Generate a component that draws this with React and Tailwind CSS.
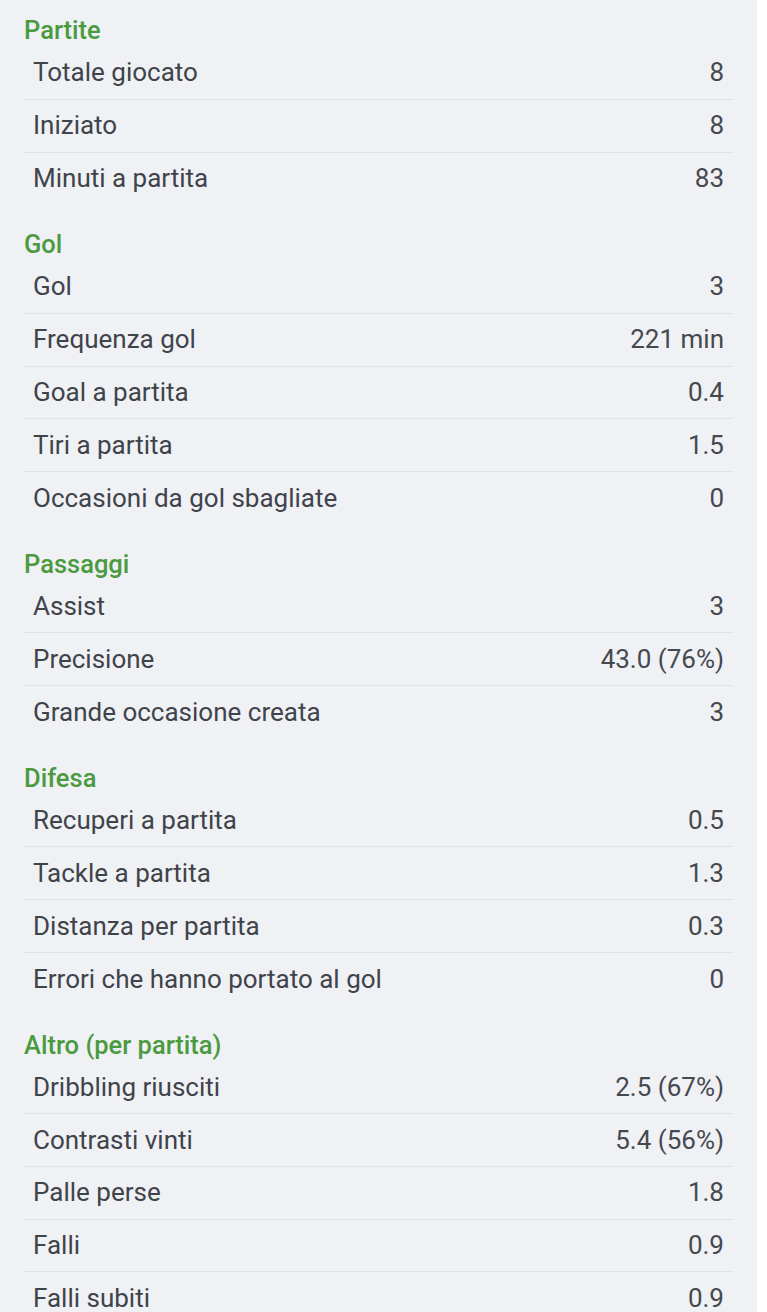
import React from "react";

const sections = [
  {
    title: "Partite",
    rows: [
      ["Totale giocato", "8"],
      ["Iniziato", "8"],
      ["Minuti a partita", "83"],
    ],
  },
  {
    title: "Gol",
    rows: [
      ["Gol", "3"],
      ["Frequenza gol", "221 min"],
      ["Goal a partita", "0.4"],
      ["Tiri a partita", "1.5"],
      ["Occasioni da gol sbagliate", "0"],
    ],
  },
  {
    title: "Passaggi",
    rows: [
      ["Assist", "3"],
      ["Precisione", "43.0 (76%)"],
      ["Grande occasione creata", "3"],
    ],
  },
  {
    title: "Difesa",
    rows: [
      ["Recuperi a partita", "0.5"],
      ["Tackle a partita", "1.3"],
      ["Distanza per partita", "0.3"],
      ["Errori che hanno portato al gol", "0"],
    ],
  },
  {
    title: "Altro (per partita)",
    rows: [
      ["Dribbling riusciti", "2.5 (67%)"],
      ["Contrasti vinti", "5.4 (56%)"],
      ["Palle perse", "1.8"],
      ["Falli", "0.9"],
      ["Falli subiti", "0.9"],
    ],
  },
];

export default function App() {
  return (
    <div className="min-h-screen bg-white font-['Roboto',sans-serif]">
      <div className="w-[757px] h-[1312px] overflow-hidden bg-[#eff1f5] px-[24px] pt-[14px]">
        {sections.map((s, si) => (
          <div key={s.title} className={si === 0 ? "" : "mt-[22.8px]"}>
            <div className="h-[33px] flex items-center text-[25.5px] font-medium text-[#4b9a3f]">
              {s.title}
            </div>
            {s.rows.map(([label, val], i) => (
              <div
                key={label}
                className={`h-[52.75px] flex items-center justify-between pl-[9px] pr-[9px] text-[26px] text-[#3f434a] ${
                  i < s.rows.length - 1 ? "border-b border-[#dfe2e7]" : ""
                }`}
              >
                <span>{label}</span>
                <span className="text-[#45494f]">{val}</span>
              </div>
            ))}
          </div>
        ))}
      </div>
    </div>
  );
}
